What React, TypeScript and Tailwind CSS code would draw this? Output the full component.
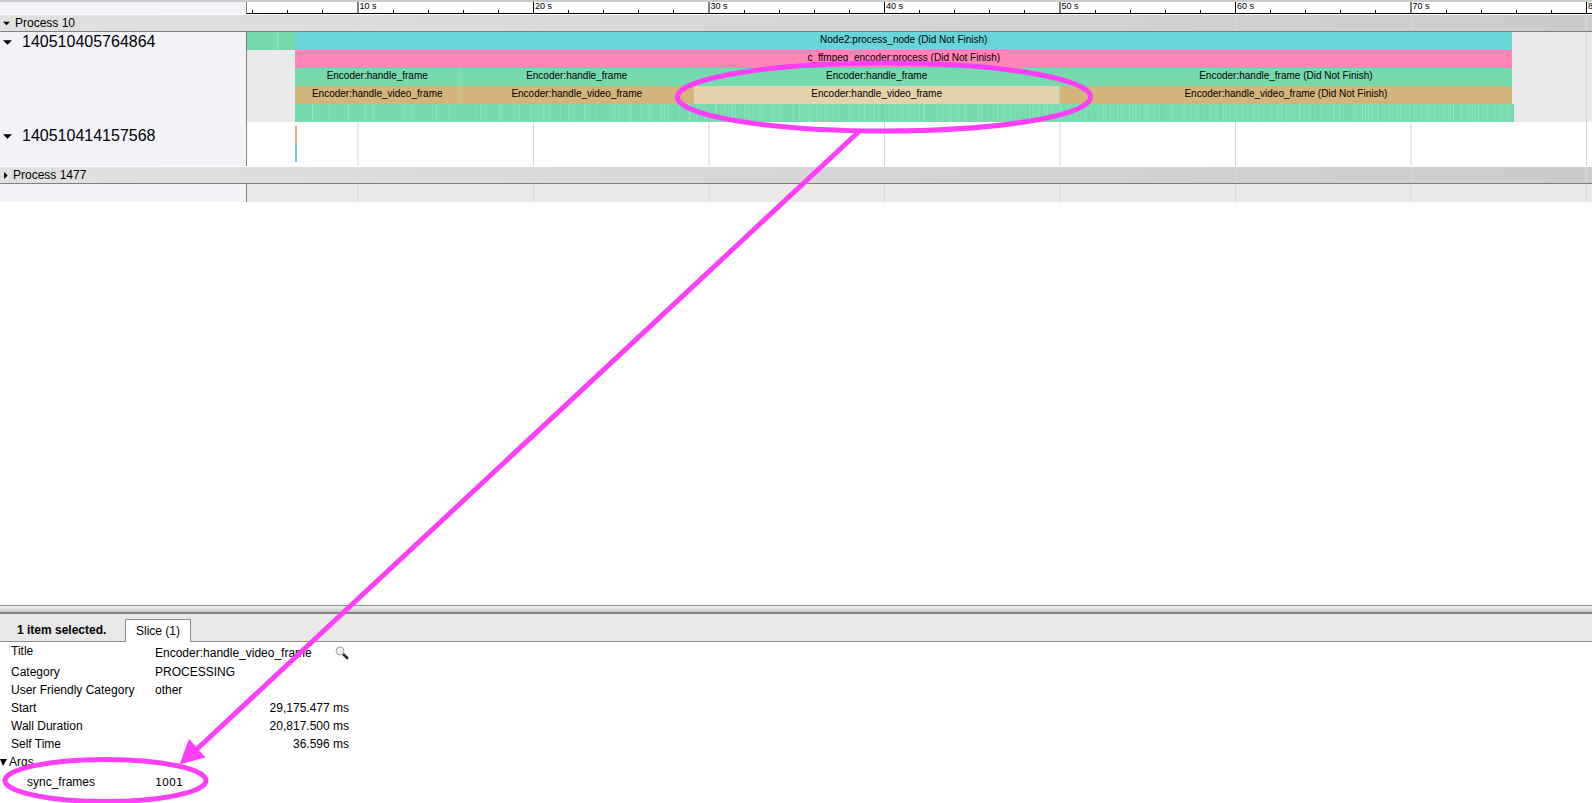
import type { ReactNode } from "react";

const START = 3.704;
const END = 80.342;
const SPAN = END - START;
const pct = (seconds: number) => (seconds / SPAN) * 100;
const at = (time: number) => `${pct(time - START)}%`;

type Slice = { start: number; end: number; color: string; label?: string };

const threadRows: Slice[][] = [
  [
    { start: 3.704, end: 6.44, color: "bg-[#76daae]" },
    { start: 6.44, end: 75.81, color: "bg-[#68d5d8]", label: "Node2:process_node (Did Not Finish)" },
  ],
  [{ start: 6.44, end: 75.81, color: "bg-[#ff85b6]", label: "c_ffmpeg_encoder:process (Did Not Finish)" }],
  [
    { start: 6.44, end: 15.81, color: "bg-[#76daae]", label: "Encoder:handle_frame" },
    { start: 15.81, end: 29.175, color: "bg-[#76daae]", label: "Encoder:handle_frame" },
    { start: 29.175, end: 49.993, color: "bg-[#76daae]", label: "Encoder:handle_frame" },
    { start: 49.993, end: 75.81, color: "bg-[#76daae]", label: "Encoder:handle_frame (Did Not Finish)" },
  ],
  [
    { start: 6.44, end: 15.81, color: "bg-[#d3b57c]", label: "Encoder:handle_video_frame" },
    { start: 15.81, end: 29.175, color: "bg-[#d3b57c]", label: "Encoder:handle_video_frame" },
    { start: 29.175, end: 49.993, color: "bg-[#e5d1ac]", label: "Encoder:handle_video_frame" },
    { start: 49.993, end: 75.81, color: "bg-[#d3b57c]", label: "Encoder:handle_video_frame (Did Not Finish)" },
  ],
];

const majors = [10, 20, 30, 40, 50, 60, 70, 80];
const minors = Array.from({ length: 39 }, (_, i) => 4 + i * 2).filter((t) => t % 10 !== 0 && t < END);

function makeGaps() {
  const gaps: { time: number; opacity: number }[] = [];
  let seed = 41;
  const next = () => {
    seed = (seed * 16807) % 2147483647;
    return seed / 2147483647;
  };
  let time = 6.9;
  while (time < 75.7) {
    gaps.push({ time, opacity: 0.06 + next() * 0.18 });
    const mean = time < 16 ? 0.6 : time < 30 ? 0.4 : 0.22;
    time += 0.1 + next() * 2 * (mean - 0.08);
  }
  return gaps;
}
const gaps = makeGaps();

function GridLines() {
  return (
    <svg className="pointer-events-none absolute inset-0 h-full w-full" aria-hidden="true">
      {majors.map((t) => (
        <rect key={t} x={at(t)} y="0" width="1" height="100%" fill="#d6d6d6" />
      ))}
    </svg>
  );
}

function Ruler() {
  return (
    <div className="relative h-3 min-w-0 flex-1 overflow-hidden border-b border-black bg-white">
      <svg className="absolute inset-0 h-full w-full" aria-hidden="true">
        {minors.map((t) => (
          <rect key={t} x={at(t)} y="8" width="1" height="4" shapeRendering="crispEdges" />
        ))}
        {majors.map((t) => (
          <rect key={t} x={at(t)} y="0" width="1" height="12" />
        ))}
      </svg>
      {majors.map((t) => (
        <span
          key={t}
          className="absolute top-0 pl-[2px] text-[9px] leading-[9px] whitespace-nowrap"
          style={{ left: at(t) }}
        >
          {t} s
        </span>
      ))}
    </div>
  );
}

function Arrow({ open, size }: { open: boolean; size: number }) {
  return (
    <svg width={size} height={size} viewBox="0 0 10 10" aria-hidden="true">
      <path d={open ? "M0 2.5H10L5 7.5Z" : "M3 0V10L8 5Z"} />
    </svg>
  );
}

function ProcessHeader({ name, open }: { name: string; open: boolean }) {
  return (
    <div className="relative mt-px flex h-[17px] border-b border-[#808080] bg-gradient-to-r from-[#e1e1e1] to-[#cbcbcb]">
      <div className="w-[247px] shrink-0">
        <button
          type="button"
          className={
            open
              ? "flex items-center gap-[5px] pl-[3px] text-xs leading-4"
              : "flex items-center gap-1 pl-[2px] text-xs leading-4"
          }
        >
          <Arrow open={open} size={7} />
          {name}
        </button>
      </div>
      <div className="relative flex-1">
        <GridLines />
      </div>
    </div>
  );
}

function Track({ name, inset, children }: { name?: string; inset?: boolean; children: ReactNode }) {
  return (
    <div className="flex">
      <div
        className={
          inset
            ? "w-[247px] shrink-0 border-r border-[#808080] bg-[#f1f3f8] pt-1"
            : "w-[247px] shrink-0 border-r border-[#808080] bg-[#f1f3f8]"
        }
      >
        {name && (
          <button type="button" className="flex items-center gap-[10px] pl-[3px] text-base leading-5">
            <Arrow open size={9} />
            {name}
          </button>
        )}
      </div>
      <div className="relative min-w-0 flex-1">{children}</div>
    </div>
  );
}

function SliceRow({ slices }: { slices: Slice[] }) {
  return (
    <div className="relative flex h-[18px]">
      <div className="shrink-0" style={{ width: at(slices[0].start) }} />
      {slices.map((s) => (
        <div
          key={s.start}
          className={`shrink-0 overflow-hidden text-center text-[10px] leading-4 whitespace-nowrap ${s.color}`}
          style={{ width: `${pct(s.end - s.start)}%` }}
        >
          {s.label}
        </div>
      ))}
    </div>
  );
}

function Magnifier() {
  return (
    <svg width="14" height="14" viewBox="0 0 14 14" aria-hidden="true">
      <path d="M8 8L12.2 12" stroke="#2a2a2a" strokeWidth="2.6" strokeLinecap="round" />
      <circle cx="5" cy="5" r="4" fill="#e9f0f4" stroke="#a3a3a3" strokeWidth="1" />
      <path d="M2.8 4.6A2.4 2.4 0 0 1 5 2.6" stroke="#fff" fill="none" />
    </svg>
  );
}

const details = [
  { label: "Category", value: "PROCESSING" },
  { label: "User Friendly Category", value: "other" },
  { label: "Start", value: "29,175.477 ms", numeric: true },
  { label: "Wall Duration", value: "20,817.500 ms", numeric: true },
  { label: "Self Time", value: "36.596 ms", numeric: true },
];

export default function App() {
  return (
    <div className="relative flex min-h-screen flex-col overflow-hidden bg-white font-['Liberation_Sans',Arial,sans-serif] text-black">
      <main className="flex-1">
        <div className="h-[2px] bg-[#cccccc]" />
        <div className="flex">
          <div className="w-[247px] shrink-0 border-r border-[#808080] bg-[#f1f3f8]" />
          <Ruler />
        </div>
        <ProcessHeader name="Process 10" open />
        <Track name="140510405764864">
          <div className="relative bg-[#eaeaea]">
            <GridLines />
            {threadRows.map((row, i) => (
              <SliceRow key={i} slices={row} />
            ))}
            <div className="relative flex h-[18px]">
              <div className="shrink-0" style={{ width: at(6.44) }} />
              <div className="bg-[#76daae]" style={{ width: `${pct(69.45)}%` }} />
            </div>
            <svg className="absolute inset-0 h-full w-full" aria-hidden="true">
              <rect x={at(5.42)} y="0" width="1" height="18" fill="#fff" opacity="0.3" />
              <rect x={at(4.5)} y="0" width="1" height="18" fill="#fff" opacity="0.1" />
              <rect x={at(15.79)} y="36" width="1" height="36" fill="#a9dcb4" opacity="0.7" />
              <rect x={at(49.96)} y="54" width="1" height="18" fill="#a9dcb4" />
              {gaps.map((g) => (
                <rect key={g.time} x={at(g.time)} y="72" width="1" height="18" fill="#fff" opacity={g.opacity} />
              ))}
            </svg>
          </div>
        </Track>
        <Track name="140510414157568" inset>
          <GridLines />
          <div className="relative h-11 py-1">
            <div className="flex h-[18px]">
              <div className="shrink-0" style={{ width: at(6.44) }} />
              <div className="w-[2px] bg-[#ffa18e]" />
            </div>
            <div className="flex h-[18px]">
              <div className="shrink-0" style={{ width: at(6.44) }} />
              <div className="w-[2px] bg-[#74bdfb]" />
            </div>
          </div>
        </Track>
        <ProcessHeader name="Process 1477" open={false} />
        <Track>
          <div className="relative h-[18px] bg-[#eaeaea]">
            <GridLines />
          </div>
        </Track>
      </main>

      <section>
        <div className="h-[9px] border-t border-b-2 border-t-[#8e8e8e] border-b-[#828282] bg-gradient-to-b from-[#f4f4f4] to-[#c6c6c6]" />
        <div className="flex h-7 items-end border-b border-[#8e8e8e] bg-[#e8e8e8] text-xs leading-4">
          <div className="w-[125px] pb-[3px] pl-[17px] font-bold">1 item selected.</div>
          <button
            type="button"
            className="-mb-px h-[23px] border border-b-0 border-[#8e8e8e] bg-white px-[10px] pb-px"
          >
            Slice (1)
          </button>
        </div>
        <table className="w-[349px] table-fixed border-collapse text-xs leading-[18px]">
          <tbody>
            <tr className="h-[21px] align-top">
              <td className="w-[155px] pl-[11px]">Title</td>
              <td className="pt-[2px]">
                <div className="flex items-center justify-between">
                  Encoder:handle_video_frame
                  <button type="button" aria-label="Find similar slices">
                    <Magnifier />
                  </button>
                </div>
              </td>
            </tr>
            {details.map((d) => (
              <tr key={d.label} className="h-[18px]">
                <td className="pl-[11px]">{d.label}</td>
                <td className={d.numeric ? "text-right" : "text-left"}>{d.value}</td>
              </tr>
            ))}
            <tr className="h-[18px]">
              <td colSpan={2}>
                <button type="button" className="flex items-center gap-[2px]">
                  <svg width="7" height="8" viewBox="0 0 7 8" aria-hidden="true">
                    <path d="M0 1H7L3 8Z" />
                  </svg>
                  Args
                </button>
              </td>
            </tr>
            <tr className="h-8 align-top">
              <td className="pt-[2px] pl-[27px]">sync_frames</td>
              <td className="pt-[3px] font-['DejaVu_Sans',sans-serif] text-[11px]">1001</td>
            </tr>
          </tbody>
        </table>
      </section>

      <svg
        className="pointer-events-none absolute top-0 left-0"
        width="1100"
        height="803"
        viewBox="0 0 1100 803"
        fill="none"
        stroke="#ff3ef8"
        strokeWidth="5"
        aria-hidden="true"
      >
        <ellipse cx="884" cy="97" rx="206.5" ry="34" />
        <path d="M858.5 132L196 750" />
        <path d="M179.500 764.500L189 739L205.500 757.500Z" fill="#ff3ef8" stroke="none" />
        <ellipse cx="105.500" cy="780.500" rx="100.500" ry="21" />
      </svg>
    </div>
  );
}
